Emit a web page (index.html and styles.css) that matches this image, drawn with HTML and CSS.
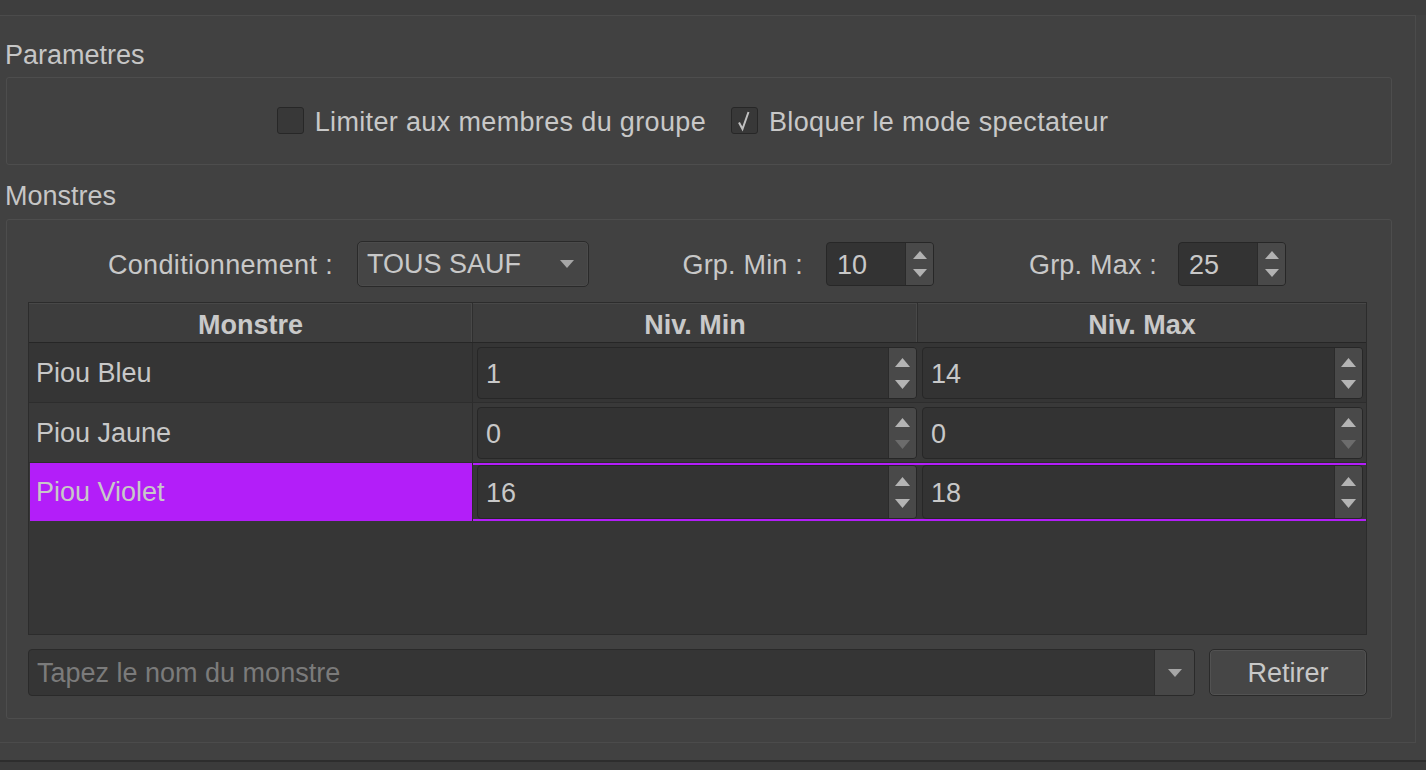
FILE: index.html
```html
<!DOCTYPE html>
<html lang="fr">
<head>
<meta charset="utf-8">
<title>Monstres</title>
<link rel="stylesheet" href="styles.css">
</head>
<body>
<div class="topstrip"></div>
<div class="panel">
  <div class="title first">Parametres</div>
  <div class="group params">
    <label class="check">
      <span class="box"></span>
      <span class="check-text">Limiter aux membres du groupe</span>
    </label>
    <label class="check second">
      <span class="box">
        <svg width="27" height="27" viewBox="0 0 27 27"><polyline points="8,15.5 11.5,22 17.5,5" fill="none" stroke="#c0c0c0" stroke-width="2" stroke-linejoin="miter"/></svg>
      </span>
      <span class="check-text">Bloquer le mode spectateur</span>
    </label>
  </div>

  <div class="title">Monstres</div>
  <div class="group monsters">
    <div class="ctrl-row">
      <span class="lbl l1">Conditionnement :</span>
      <div class="combo">
        <span class="combo-text">TOUS SAUF</span>
        <svg width="14" height="8" viewBox="0 0 14 8"><polygon points="0,0 14,0 7,8" fill="#a6a6a6"/></svg>
      </div>
      <span class="lbl l2">Grp. Min :</span>
      <div class="spin small">
        <span class="val">10</span>
        <span class="arr"><svg width="14" height="26" viewBox="0 0 14 26"><polygon points="7,0 14,8 0,8" fill="#b2b2b2"/><polygon points="0,18 14,18 7,26" fill="#b2b2b2"/></svg></span>
      </div>
      <span class="lbl l3">Grp. Max :</span>
      <div class="spin small">
        <span class="val">25</span>
        <span class="arr"><svg width="14" height="26" viewBox="0 0 14 26"><polygon points="7,0 14,8 0,8" fill="#b2b2b2"/><polygon points="0,18 14,18 7,26" fill="#b2b2b2"/></svg></span>
      </div>
    </div>

    <div class="table">
      <div class="thead">
        <div class="th">Monstre</div>
        <div class="th">Niv. Min</div>
        <div class="th last">Niv. Max</div>
      </div>

      <div class="tr r1">
        <div class="td name">Piou Bleu</div>
        <div class="td ed c2">
          <div class="spin"><span class="val">1</span><span class="arr"><svg width="15" height="31" viewBox="0 0 15 31"><polygon points="7.5,0 15,9 0,9" fill="#b4b4b4"/><polygon points="0,22 15,22 7.5,31" fill="#b4b4b4"/></svg></span></div>
        </div>
        <div class="td ed c3">
          <div class="spin"><span class="val">14</span><span class="arr"><svg width="15" height="31" viewBox="0 0 15 31"><polygon points="7.5,0 15,9 0,9" fill="#b4b4b4"/><polygon points="0,22 15,22 7.5,31" fill="#b4b4b4"/></svg></span></div>
        </div>
      </div>

      <div class="tr r2">
        <div class="td name">Piou Jaune</div>
        <div class="td ed c2">
          <div class="spin"><span class="val">0</span><span class="arr"><svg width="15" height="31" viewBox="0 0 15 31"><polygon points="7.5,0 15,9 0,9" fill="#b4b4b4"/><polygon points="0,22 15,22 7.5,31" fill="#6c6c6c"/></svg></span></div>
        </div>
        <div class="td ed c3">
          <div class="spin"><span class="val">0</span><span class="arr"><svg width="15" height="31" viewBox="0 0 15 31"><polygon points="7.5,0 15,9 0,9" fill="#b4b4b4"/><polygon points="0,22 15,22 7.5,31" fill="#6c6c6c"/></svg></span></div>
        </div>
      </div>

      <div class="tr r3 selected">
        <div class="td name">Piou Violet</div>
        <div class="td ed c2">
          <div class="spin"><span class="val">16</span><span class="arr"><svg width="15" height="31" viewBox="0 0 15 31"><polygon points="7.5,0 15,9 0,9" fill="#b4b4b4"/><polygon points="0,22 15,22 7.5,31" fill="#b4b4b4"/></svg></span></div>
        </div>
        <div class="td ed c3">
          <div class="spin"><span class="val">18</span><span class="arr"><svg width="15" height="31" viewBox="0 0 15 31"><polygon points="7.5,0 15,9 0,9" fill="#b4b4b4"/><polygon points="0,22 15,22 7.5,31" fill="#b4b4b4"/></svg></span></div>
        </div>
      </div>

      <div class="filler"></div>
    </div>

    <div class="bottom-row">
      <div class="search">
        <span class="ph">Tapez le nom du monstre</span>
        <span class="drop"><svg width="14" height="8" viewBox="0 0 14 8"><polygon points="0,0 14,0 7,8" fill="#a6a6a6"/></svg></span>
      </div>
      <button class="btn">Retirer</button>
    </div>
  </div>
</div>
<div class="footer"></div>
</body>
</html>
```

FILE: styles.css
```css
html, body {
  margin: 0;
  padding: 0;
}

body {
  background: #414141;
  font-family: "Liberation Sans", Arial, sans-serif;
  font-size: 27px;
  color: #c8c8c8;
  height: 770px;
  overflow: hidden;
}

.topstrip {
  height: 15px;
  background: #3e3e3e;
}

.panel {
  margin-left: -1px;
  width: 1417px;
  height: 728px;
  box-sizing: border-box;
  border: 1px solid #4b4b4b;
  padding: 0 23px 0 6px;
}

.title {
  height: 30px;
  line-height: 30px;
  margin: 16px 0 8px -1px;
  color: #c6c6c6;
}

.title.first {
  margin-top: 24px;
  margin-bottom: 7px;
}

.group {
  border: 1px solid #4d4d4d;
  border-radius: 3px;
  box-sizing: border-box;
}

.params {
  height: 88px;
  display: flex;
  align-items: center;
  justify-content: center;
  padding: 0 13px 1px 0;
}

.check {
  display: flex;
  align-items: center;
}

.check.second {
  margin-left: 25px;
}

.box {
  width: 27px;
  height: 27px;
  box-sizing: border-box;
  border: 1px solid #272727;
  border-radius: 3px;
  background: #383838;
  display: flex;
  align-items: center;
  justify-content: center;
}

.box svg {
  display: block;
  margin: -1px;
}

.check-text {
  margin-left: 11px;
  letter-spacing: 0.35px;
  padding-top: 3px;
}

.monsters {
  height: 500px;
  padding: 21px 24px 0 21px;
}

.ctrl-row {
  display: flex;
  align-items: center;
  height: 46px;
}

.lbl {
  text-align: right;
  white-space: nowrap;
  padding-top: 3px;
}

.l1 { width: 305px; margin-right: 24px; letter-spacing: 0.35px; }
.l2 { width: 214px; margin-right: 23px; letter-spacing: 0.2px; }
.l3 { width: 223px; margin-right: 21px; letter-spacing: 0.2px; }

.combo {
  width: 232px;
  height: 46px;
  box-sizing: border-box;
  border: 1px solid #2a2a2a;
  border-radius: 5px;
  background: #454545;
  box-shadow: inset 0 0 0 1px #4b4b4b;
  display: flex;
  align-items: center;
  justify-content: space-between;
  padding: 0 14px 0 9px;
}

.combo-text {
  padding-top: 1px;
}

.spin {
  display: flex;
  box-sizing: border-box;
  border: 1px solid #272727;
  border-radius: 4px;
  background: #333333;
  height: 100%;
}

.spin .val {
  flex: 1;
  display: flex;
  align-items: center;
  padding-left: 8px;
  padding-top: 2px;
}

.spin .arr {
  width: 27px;
  background: #494949;
  border-left: 1px solid #2b2b2b;
  border-radius: 0 3px 3px 0;
  display: flex;
  align-items: center;
  justify-content: center;
}

.spin .arr svg {
  display: block;
}

.spin.small {
  width: 108px;
  height: 44px;
}

.spin.small .val {
  padding-left: 10px;
  padding-top: 3px;
}

.table {
  margin-top: 15px;
  height: 333px;
  box-sizing: border-box;
  border: 1px solid #2c2c2c;
  background: #363636;
  display: flex;
  flex-direction: column;
}

.thead,
.tr {
  display: grid;
  grid-template-columns: 444px 445px 1fr;
}

.thead {
  height: 40px;
  box-sizing: border-box;
  background: #3d3d3d;
  border-bottom: 1px solid #262626;
}

.th {
  font-weight: bold;
  color: #c9c9c9;
  display: flex;
  align-items: center;
  justify-content: center;
  padding-top: 5px;
  border-right: 1px solid #2f2f2f;
  box-shadow: inset 0 1px 0 #484848, inset -1px 0 0 #484848;
}

.th.last {
  border-right: none;
  box-shadow: inset 0 1px 0 #484848;
}

.tr {
  height: 60px;
  box-sizing: border-box;
  border-bottom: 1px solid #2d2d2d;
}

.tr.r1 { background: #353535; }
.tr.r2 { background: #393939; }

.tr.r3 {
  height: 58px;
  border-bottom: none;
  background: #363636;
}

.td.name {
  display: flex;
  align-items: center;
  padding-left: 7px;
  border-right: 1px solid #2c2c2c;
  padding-top: 1px;
}

.td.ed {
  box-sizing: border-box;
  padding: 4px 1px 3px 4px;
}

.td.ed.c3 {
  padding: 4px 3px 3px 4px;
}

.selected .td.name {
  background: #b31ef9;
  margin-left: 1px;
  padding-left: 6px;
}

.selected .td.ed {
  padding-top: 2px;
  padding-bottom: 2px;
  background:
    linear-gradient(#b31ef9, #b31ef9) top left / 100% 2px no-repeat,
    linear-gradient(#b31ef9, #b31ef9) bottom left / 100% 2px no-repeat;
}

.filler {
  flex: 1;
  background: #363636;
}

.bottom-row {
  margin-top: 14px;
  height: 47px;
  display: flex;
}

.search {
  flex: 1;
  display: flex;
  box-sizing: border-box;
  border: 1px solid #2a2a2a;
  border-radius: 4px;
  background: #353535;
}

.ph {
  flex: 1;
  display: flex;
  align-items: center;
  padding-left: 8px;
  padding-top: 2px;
  color: #7b7b7b;
}

.drop {
  width: 39px;
  background: #474747;
  border-left: 1px solid #2d2d2d;
  border-radius: 0 3px 3px 0;
  display: flex;
  align-items: center;
  justify-content: center;
}

.btn {
  margin-left: 14px;
  width: 158px;
  box-sizing: border-box;
  border: 1px solid #2a2a2a;
  border-radius: 5px;
  background: #464646;
  box-shadow: inset 0 0 0 1px #525252;
  font-family: "Liberation Sans", Arial, sans-serif;
  font-size: 27px;
  color: #c8c8c8;
  padding: 2px 0 0 0;
}

.footer {
  margin-top: 17px;
  height: 30px;
  border-top: 2px solid #2d2d2d;
  background: #3b3b3b;
}
```
